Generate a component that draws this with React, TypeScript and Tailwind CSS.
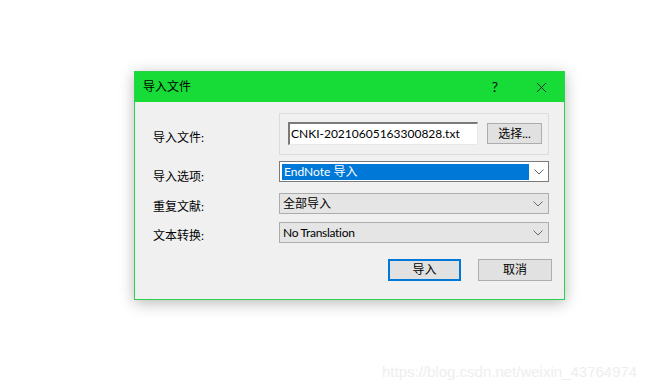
import { X } from 'lucide-react'

const font = { fontFamily: 'Lato, "Noto Sans CJK SC", sans-serif' }

function Chevron() {
  return (
    <svg width="10" height="6" viewBox="0 0 10 6" className="shrink-0">
      <path d="M0.5 0.5 L5 5 L9.5 0.5" fill="none" stroke="#6a6a6a" strokeWidth="1" />
    </svg>
  )
}

export default function App() {
  return (
    <div
      className="relative w-[663px] h-[391px] bg-white overflow-hidden pt-[71px] pl-[134px] text-[12px] leading-[16px] text-black"
      style={font}
    >
      <div className="w-[431px] h-[229px] border border-[#2bd14b] bg-[#f0f0f0] flex flex-col shadow-[0_3px_14px_rgba(0,0,0,0.28)]">
        <div className="h-[30px] bg-[#17dc38] flex items-center pl-[8px]">
          <span>导入文件</span>
          <div className="ml-auto flex h-full">
            <div className="w-[46px] flex items-center justify-center text-[14px]">?</div>
            <div className="w-[46px] flex items-center justify-center">
              <X className="w-[17px] h-[17px]" strokeWidth={1.1} />
            </div>
          </div>
        </div>

        <div className="pt-[11px] pl-[18px] flex flex-col">
          <div className="flex h-[42px]">
            <div className="w-[126px] pt-[17px]">导入文件:</div>
            <div className="w-[270px] h-[42px] border border-[#dcdcdc] pt-[8px] pl-[8px] flex items-start">
              <div className="w-[190px] h-[23px] bg-white border-t-2 border-l-2 border-r border-b border-t-[#7a7a7a] border-l-[#7a7a7a] border-r-[#e8e8e8] border-b-[#e8e8e8] pl-[1px] flex items-center">
                CNKI-20210605163300828.txt
              </div>
              <button className="ml-[9px] mt-[1px] w-[55px] h-[21px] bg-[#e1e1e1] border border-[#adadad] flex items-center justify-center">
                选择...
              </button>
            </div>
          </div>

          <div className="flex h-[21px] mt-[6px]">
            <div className="w-[126px] pt-[8px]">导入选项:</div>
            <div className="w-[270px] h-[21px] border border-[#7a7a7a] bg-white flex items-center">
              <div className="ml-[2px] w-[247px] h-[16px] bg-[#0078d7] text-white pl-[2px] flex items-center">
                EndNote 导入
              </div>
              <div className="flex-1 flex justify-center">
                <Chevron />
              </div>
            </div>
          </div>

          <div className="flex h-[21px] mt-[11px]">
            <div className="w-[126px] pt-[6px]">重复文献:</div>
            <div className="w-[270px] h-[21px] border border-[#adadad] bg-[#e5e5e5] flex items-center pl-[3px] pr-[5px]">
              <span className="flex-1">全部导入</span>
              <Chevron />
            </div>
          </div>

          <div className="flex h-[21px] mt-[8px]">
            <div className="w-[126px] pt-[6px]">文本转换:</div>
            <div className="w-[270px] h-[21px] border border-[#adadad] bg-[#e5e5e5] flex items-center pl-[3px] pr-[5px]">
              <span className="flex-1 tracking-[-0.3px]">No Translation</span>
              <Chevron />
            </div>
          </div>

          <div className="flex mt-[16px] ml-[235px] gap-[17px]">
            <button className="w-[73px] h-[22px] bg-[#e1e1e1] border-2 border-[#0078d7] flex items-center justify-center">
              导入
            </button>
            <button className="w-[74px] h-[22px] bg-[#e1e1e1] border border-[#adadad] flex items-center justify-center">
              取消
            </button>
          </div>
        </div>
      </div>

      <div
        className="absolute left-[382px] top-[363px] text-[15px] leading-[18px] text-[#eeeeee]"
        style={{ fontFamily: '"Liberation Sans", Arial, sans-serif' }}
      >
        https://blog.csdn.net/weixin_43764974
      </div>
    </div>
  )
}
